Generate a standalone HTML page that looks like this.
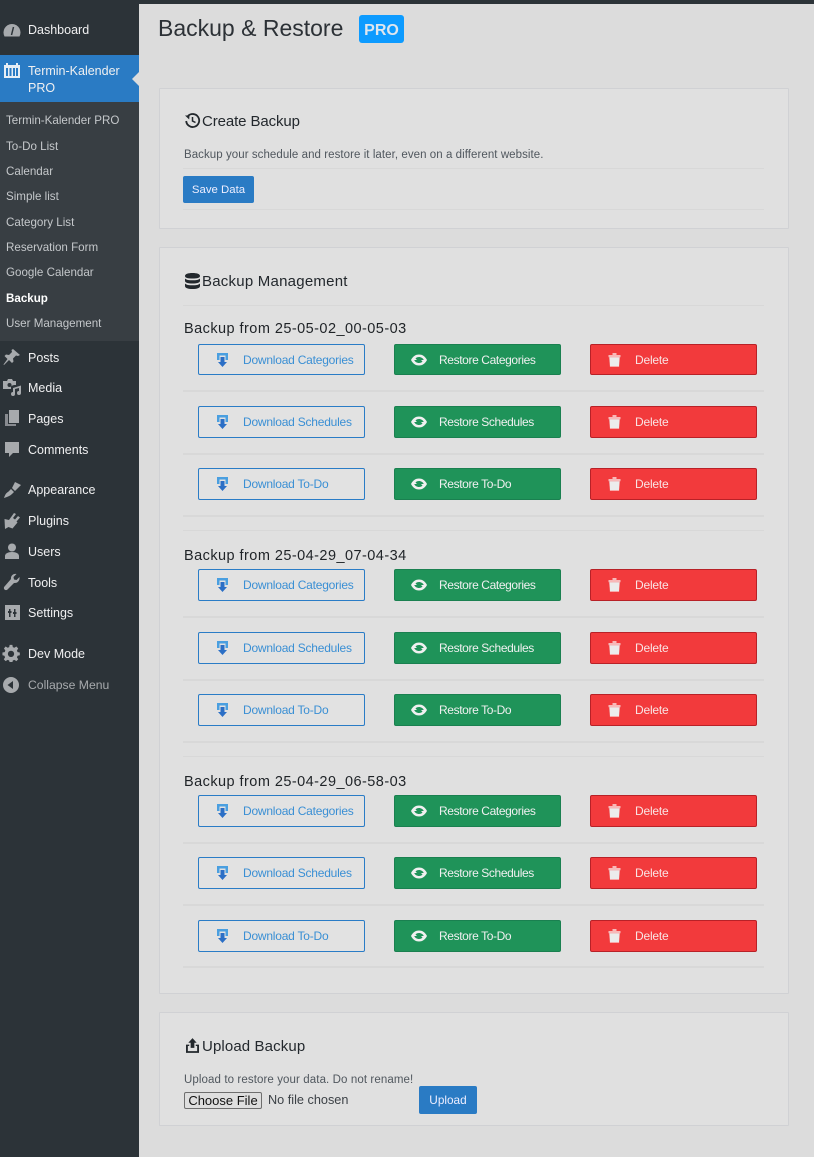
<!DOCTYPE html>
<html><head><meta charset="utf-8"><style>
html,body{margin:0;padding:0}
body{width:814px;height:1157px;position:relative;overflow:hidden;background:#dcdcdc;font-family:"Liberation Sans",sans-serif;}
.a,.t,.b,.i,.l{position:absolute}
.t{white-space:nowrap;line-height:16px}
.m{font-size:12.5px;color:#f0f0f1;left:28px}
.s{font-size:11.6px;color:#c5c8cb;left:6px}
.i{width:20px;height:20px;fill:#a7aaad;left:2px}
.card{position:absolute;left:159px;width:628px;background:#e0e0e0;border:1px solid #d0d1d4;border-radius:1px}
.l{left:183px;width:581px;background:#d8d8d8}
.h{font-size:15px;color:#23282d;left:202px}
.bh{font-size:14.5px;color:#1f2327;left:184px;letter-spacing:.45px}
.p{font-size:11.5px;color:#50575e;left:184px}
.b{width:165px;border-radius:2px;border:1px solid;font-size:12px;box-sizing:content-box}
.b span{position:absolute;left:44px;top:50%;margin-top:-8px;line-height:16px;white-space:nowrap}
.b svg{position:absolute;left:16px;top:50%;margin-top:-8px;width:16px;height:16px}
.d{left:198px;border-color:#2a7cc6;color:#3a8fd4;background:#e2e2e2}
.d span{letter-spacing:-.22px}
.g{left:394px;border-color:#1a8050;background:#1f9359;color:#f0f0f0}
.g span{letter-spacing:-.38px}
.r{left:590px;border-color:#b82127;background:#f23a3c;color:#f9e4e4}
.r span{letter-spacing:-.2px}
.pro{position:absolute;left:359px;top:15px;width:45px;height:28px;border-radius:3px;background:#0d9bff;color:#dfe6ee;font-weight:bold;font-size:16px;text-align:center;line-height:31px}
.blue{position:absolute;background:#2a7bc4;border-radius:2px;color:#eef;font-size:11.4px;text-align:center}
</style></head><body>
<svg width="0" height="0" style="position:absolute"><defs>
<symbol id="dl" viewBox="0 0 16 16"><path d="M2 1h11v7h-2.500V3.500h-6V8H2z" fill="#4a9fe0"/><path d="M5.500 5h4v5h2.500L7.500 15 3 10h2.500z" fill="#2b6fc6"/></symbol>
<symbol id="re" viewBox="0 0 16 16"><path d="M0 8C2 4 5 2.500 8 2.500S14 4 16 8l-3 .5C12 6 10 5 8 5 6.500 5 5.300 5.600 4.500 6.500L6 8z" fill="#f0f0f0"/><path d="M16 8c-2 4-5 5.500-8 5.500S2 12 0 8l3-.5C4 10 6 11 8 11c1.500 0 2.700-.6 3.500-1.500L10 8z" fill="#f0f0f0"/></symbol>
<symbol id="tr" viewBox="0 0 16 16"><path d="M1.500 3h12v2.200h-12zM5.500 1h4v2h-4z" fill="#f8b8b8"/><path d="M2.300 5.200h10.400l-.7 9.800H3z" fill="#ececec"/><path d="M2.900 14h9.200l-.1 1H3z" fill="#f8a8a8"/></symbol>
</defs></svg>

<div class="a" style="left:0;top:0;width:814px;height:4px;background:#2c3338"></div>
<div class="a" style="left:0;top:0;width:139px;height:1157px;background:#2c3338"></div>
<div class="a" style="left:0;top:102px;width:139px;height:239px;background:#383e43"></div>
<div class="a" style="left:0;top:55px;width:139px;height:47px;background:#2a7bc4"></div>
<div class="a" style="left:132px;top:71px;width:0;height:0;border:8px solid transparent;border-right-color:#dcdcdc;border-left:0"></div>

<svg class="i" style="top:20px" viewBox="0 0 20 20"><path d="M2.500 16.500a8.500 8.500 0 1 1 15 0z"/><path d="M9.500 15l2-8" stroke="#2c3338" stroke-width="1.500" fill="none"/></svg>
<div class="t m" style="top:22px">Dashboard</div>
<svg class="i" style="top:60px;left:2px;fill:#e6eef6" viewBox="0 0 20 20"><path fill-rule="evenodd" d="M2 5h2V3h2v2h8V3h2v2h2v13H2zM4 8v8h2V8zm3.500 0v8h2V8zm3.500 0v8h2V8zm3 0v8h2V8z"/></svg>
<div class="t m" style="top:63px;line-height:17px;white-space:normal;width:100px">Termin-Kalender PRO</div>

<div class="t s" style="top:113px">Termin-Kalender PRO</div>
<div class="t s" style="top:139px">To-Do List</div>
<div class="t s" style="top:164px">Calendar</div>
<div class="t s" style="top:189px">Simple list</div>
<div class="t s" style="top:215px">Category List</div>
<div class="t s" style="top:240px">Reservation Form</div>
<div class="t s" style="top:265px">Google Calendar</div>
<div class="t s" style="top:291px;font-weight:bold;color:#fff">Backup</div>
<div class="t s" style="top:316px">User Management</div>

<svg class="i" style="top:347px" viewBox="0 0 20 20"><path d="M11 2l7 6-2 1-2-.500-3 3 .5 3-1.500 1.500-3-3L2 18l-.5-.5 4-5.500-3-3L4 7.500l3 .5 3-3-.5-2z"/></svg>
<div class="t m" style="top:350px">Posts</div>
<svg class="i" style="top:377px" viewBox="0 0 20 20"><path fill-rule="evenodd" d="M1 4h4l1-2h4l1 2h3v4h-2l-3 1v3H1zM7.500 6a2 2 0 1 0 0 4 2 2 0 0 0 0-4zM11 11l8-2.500V16a2 2 0 1 1-2-2V11l-4 1v5a2 2 0 1 1-2-2z"/></svg>
<div class="t m" style="top:380px">Media</div>
<svg class="i" style="top:408px" viewBox="0 0 20 20"><path d="M7 2h10v13H7z"/><path d="M3 6h3v10h8v2H3z" opacity=".75"/></svg>
<div class="t m" style="top:411px">Pages</div>
<svg class="i" style="top:439px" viewBox="0 0 20 20"><path d="M3 3h14v11h-6l-4 4v-4H3z"/></svg>
<div class="t m" style="top:442px">Comments</div>
<svg class="i" style="top:480px" viewBox="0 0 20 20"><path d="M13 2l6 3-6 6-3-3zM9 9l3 3-2 2c-2 2-5 3-8 4 1-3 2-5 4-6z"/></svg>
<div class="t m" style="top:482px">Appearance</div>
<svg class="i" style="top:511px" viewBox="0 0 20 20"><path d="M12 2l2 1-3 4 2 1.500 3-3.500 2 1.500-3.500 4 1 1-5 6-4-1.500L3 18l-.5-10 4.500 1z"/></svg>
<div class="t m" style="top:513px">Plugins</div>
<svg class="i" style="top:541px" viewBox="0 0 20 20"><circle cx="10" cy="6.500" r="4"/><path d="M3 18v-3c0-2.500 3-4 7-4s7 1.500 7 4v3z"/></svg>
<div class="t m" style="top:544px">Users</div>
<svg class="i" style="top:572px" viewBox="0 0 20 20"><path d="M17.500 5l-3 3-2.500-.5-.5-2.500 3-3c-3-.8-6 1.500-5.500 5L2.500 14.500a2 2 0 1 0 3 3L12 11c3.500.5 6-2.500 5.500-6z"/></svg>
<div class="t m" style="top:575px">Tools</div>
<svg class="i" style="top:602px;left:3px" viewBox="0 0 20 20"><path fill-rule="evenodd" d="M2 3h15v15H2zM6 7v2H5v2h1v4h1.500v-4h1V9h-1V7zm5 0v3h-1v2h1v3h1.500v-3h1v-2h-1V7z"/></svg>
<div class="t m" style="top:605px">Settings</div>
<svg class="i" style="top:644px;left:2px;width:18px;height:18px" viewBox="0 0 20 20"><path fill-rule="evenodd" d="M8.500 1h3l.5 2.500 1.700.7L16 2.800 18 5l-1.400 2.200.7 1.800 2.500.5v3l-2.500.5-.7 1.800L18 17l-2 2-2.300-1.400-1.700.7-.5 2.500h-3l-.5-2.500-1.700-.7L4 19l-2-2 1.400-2.200-.7-1.800L.5 12.500v-3L3 9l.7-1.800L2.200 5 4 2.800l2.300 1.400L8 3.500zM10 7.500a3.500 3.500 0 1 0 0 7 3.500 3.500 0 0 0 0-7z"/></svg>
<div class="t m" style="top:646px">Dev Mode</div>
<svg class="i" style="top:675px;left:1px" viewBox="0 0 20 20"><path fill-rule="evenodd" d="M10 2a8 8 0 1 0 0 16 8 8 0 0 0 0-16zM12 6v8L6.500 10z"/></svg>
<div class="t m" style="top:677px;color:#a7aaad;font-size:12.2px">Collapse Menu</div>

<div class="t" style="left:158px;top:13px;font-size:23px;line-height:30px;color:#2c3136">Backup &amp; Restore</div>
<div class="pro">PRO</div>

<div class="card" style="top:88px;height:139px"></div>
<svg class="a" style="left:184px;top:112px;width:17px;height:17px" viewBox="0 0 17 17"><path d="M4 4a6.500 6.500 0 1 1-1.800 5" fill="none" stroke="#23282d" stroke-width="1.800"/><path d="M1 3.500l4.500 0-.3 4z" fill="#23282d"/><path d="M8.500 5v4l3 1.500" fill="none" stroke="#23282d" stroke-width="1.500"/></svg>
<div class="t h" style="top:114px;letter-spacing:-.1px">Create Backup</div>
<div class="t p" style="top:147px;letter-spacing:.06px">Backup your schedule and restore it later, even on a different website.</div>
<div class="l" style="top:168px;height:1px"></div>
<div class="blue" style="left:183px;top:176px;width:71px;height:27px;line-height:28px">Save Data</div>
<div class="l" style="top:209px;height:1px"></div>

<div class="card" style="top:247px;height:745px"></div>
<svg class="a" style="left:185px;top:273px;width:15px;height:16px" viewBox="0 0 15 16"><path d="M0 3c0-2 3-3 7.500-3S15 1 15 3s-3 2.500-7.500 2.500S0 5 0 3zM0 5.500C1.500 7 4 7.300 7.500 7.300S13.500 7 15 5.500V8c0 1.500-3 2.500-7.500 2.500S0 9.500 0 8zM0 10.500c1.500 1.500 4 1.800 7.500 1.800s6-.3 7.500-1.800V13c0 2-3 3-7.500 3S0 15 0 13z" fill="#23282d"/></svg>
<div class="t h" style="top:274px;letter-spacing:.23px">Backup Management</div>
<div class="l" style="top:305px;height:1px"></div>

<div class="t bh" style="top:321px">Backup from 25-05-02_00-05-03</div>
<div class="b d" style="top:344px;height:29px"><svg><use href="#dl"/></svg><span>Download Categories</span></div>
<div class="b g" style="top:344px;height:29px"><svg><use href="#re"/></svg><span>Restore Categories</span></div>
<div class="b r" style="top:344px;height:29px"><svg><use href="#tr"/></svg><span>Delete</span></div>
<div class="l" style="top:390px;height:2px"></div>
<div class="b d" style="top:406px;height:30px"><svg><use href="#dl"/></svg><span>Download Schedules</span></div>
<div class="b g" style="top:406px;height:30px"><svg><use href="#re"/></svg><span>Restore Schedules</span></div>
<div class="b r" style="top:406px;height:30px"><svg><use href="#tr"/></svg><span>Delete</span></div>
<div class="l" style="top:453px;height:2px"></div>
<div class="b d" style="top:468px;height:30px"><svg><use href="#dl"/></svg><span>Download To-Do</span></div>
<div class="b g" style="top:468px;height:30px"><svg><use href="#re"/></svg><span>Restore To-Do</span></div>
<div class="b r" style="top:468px;height:30px"><svg><use href="#tr"/></svg><span>Delete</span></div>
<div class="l" style="top:515px;height:2px"></div>
<div class="l" style="top:530px;height:1px"></div>

<div class="t bh" style="top:548px">Backup from 25-04-29_07-04-34</div>
<div class="b d" style="top:569px;height:30px"><svg><use href="#dl"/></svg><span>Download Categories</span></div>
<div class="b g" style="top:569px;height:30px"><svg><use href="#re"/></svg><span>Restore Categories</span></div>
<div class="b r" style="top:569px;height:30px"><svg><use href="#tr"/></svg><span>Delete</span></div>
<div class="l" style="top:616px;height:2px"></div>
<div class="b d" style="top:632px;height:30px"><svg><use href="#dl"/></svg><span>Download Schedules</span></div>
<div class="b g" style="top:632px;height:30px"><svg><use href="#re"/></svg><span>Restore Schedules</span></div>
<div class="b r" style="top:632px;height:30px"><svg><use href="#tr"/></svg><span>Delete</span></div>
<div class="l" style="top:679px;height:2px"></div>
<div class="b d" style="top:694px;height:30px"><svg><use href="#dl"/></svg><span>Download To-Do</span></div>
<div class="b g" style="top:694px;height:30px"><svg><use href="#re"/></svg><span>Restore To-Do</span></div>
<div class="b r" style="top:694px;height:30px"><svg><use href="#tr"/></svg><span>Delete</span></div>
<div class="l" style="top:741px;height:2px"></div>
<div class="l" style="top:756px;height:1px"></div>

<div class="t bh" style="top:774px">Backup from 25-04-29_06-58-03</div>
<div class="b d" style="top:795px;height:30px"><svg><use href="#dl"/></svg><span>Download Categories</span></div>
<div class="b g" style="top:795px;height:30px"><svg><use href="#re"/></svg><span>Restore Categories</span></div>
<div class="b r" style="top:795px;height:30px"><svg><use href="#tr"/></svg><span>Delete</span></div>
<div class="l" style="top:842px;height:2px"></div>
<div class="b d" style="top:857px;height:30px"><svg><use href="#dl"/></svg><span>Download Schedules</span></div>
<div class="b g" style="top:857px;height:30px"><svg><use href="#re"/></svg><span>Restore Schedules</span></div>
<div class="b r" style="top:857px;height:30px"><svg><use href="#tr"/></svg><span>Delete</span></div>
<div class="l" style="top:904px;height:2px"></div>
<div class="b d" style="top:920px;height:30px"><svg><use href="#dl"/></svg><span>Download To-Do</span></div>
<div class="b g" style="top:920px;height:30px"><svg><use href="#re"/></svg><span>Restore To-Do</span></div>
<div class="b r" style="top:920px;height:30px"><svg><use href="#tr"/></svg><span>Delete</span></div>
<div class="l" style="top:966px;height:2px"></div>

<div class="card" style="top:1012px;height:112px"></div>
<svg class="a" style="left:186px;top:1038px;width:13px;height:15px" viewBox="0 0 14 16"><path d="M7 0l4.500 5H9v5.500H5V5H2.500z" fill="#23282d"/><path d="M0 7h3.500v1.500H2v5.500h10V8.500h-1.500V7H14v9H0z" fill="#23282d"/></svg>
<div class="t h" style="top:1039px;letter-spacing:.12px">Upload Backup</div>
<div class="t p" style="top:1072px;letter-spacing:.1px">Upload to restore your data. Do not rename!</div>
<div class="a" style="left:184px;top:1092px;width:76px;height:15px;border:1px solid #6e6e6e;border-radius:2px;background:#dedede;color:#111;font-size:13px;line-height:15px;text-align:center;white-space:nowrap">Choose File</div>
<div class="t" style="left:268px;top:1092px;font-size:12.7px;color:#3c4146">No file chosen</div>
<div class="blue" style="left:419px;top:1086px;width:58px;height:28px;line-height:28px;font-size:11.8px">Upload</div>
</body></html>
